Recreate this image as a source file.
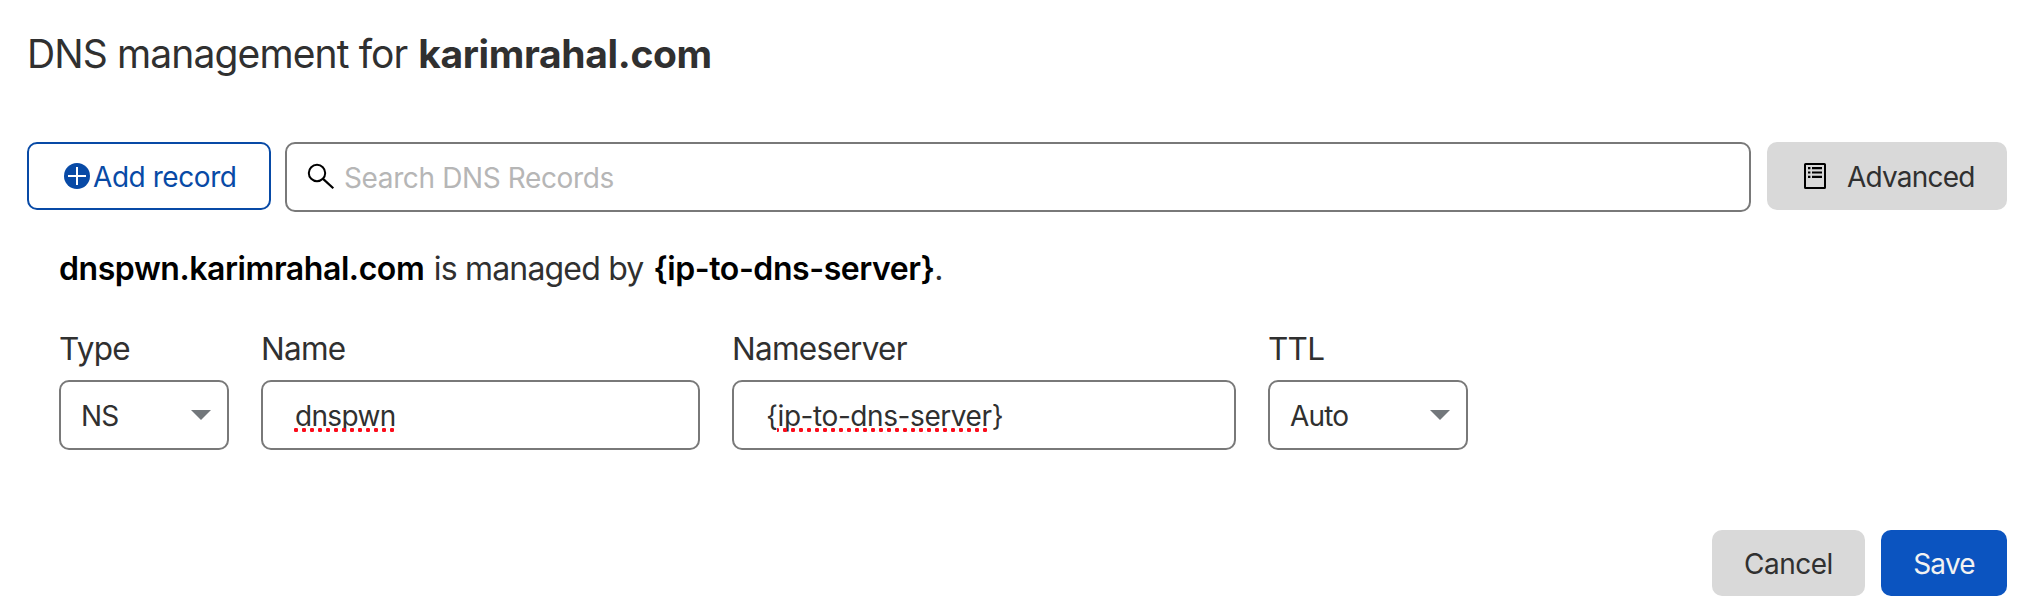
<template>
  <main class="page">
    <h1 class="title"><span>DNS management for</span>&#32;<strong>karimrahal.com</strong></h1>
    <div class="toolbar">
      <button class="btn add">
        <svg width="26" height="26" viewBox="0 0 26 26"><circle cx="13" cy="13" r="13" fill="#084aa6" /><path d="M13 4v18M4 13h18" stroke="#fff" stroke-width="2" /></svg>
        <span>Add record</span>
      </button>
      <div class="search">
        <svg width="28" height="28" viewBox="0 0 28 28" fill="none" stroke="#000"><circle cx="10" cy="10" r="8.2" stroke-width="2" /><path d="M15.8 15.6 26.3 25.2" stroke-width="2.2" /></svg>
        <span>Search DNS Records</span>
      </div>
      <button class="btn grey advanced">
        <svg width="22" height="26" viewBox="0 0 22 26" fill="none" stroke="#000"><rect x="1" y="1" width="20" height="24" rx=".6" stroke-width="2" /><path d="M4 5.2h2.4M8 5.2h10M4 9.5h2.4M8 9.5h10M4 13.8h2.4M8 13.8h10" stroke-width="2.2" /></svg>
        <span>Advanced</span>
      </button>
    </div>
    <p class="summary"><strong>dnspwn.karimrahal.com</strong>&#32;<span>is managed by</span>&#32;<strong>{ip-to-dns-server}</strong><span>.</span></p>
    <div class="fields">
      <div class="field type">
        <label>Type</label>
        <div class="box select"><span>NS</span><svg width="20" height="10" viewBox="0 0 20 10"><path d="M0 0h20L10 10z" fill="#72777b" /></svg></div>
      </div>
      <div class="field name">
        <label>Name</label>
        <div class="box"><span class="spell">dnspwn</span></div>
      </div>
      <div class="field ns">
        <label>Nameserver</label>
        <div class="box"><span class="spell inner">{ip-to-dns-server}</span></div>
      </div>
      <div class="field ttl">
        <label>TTL</label>
        <div class="box select"><span>Auto</span><svg width="20" height="10" viewBox="0 0 20 10"><path d="M0 0h20L10 10z" fill="#72777b" /></svg></div>
      </div>
    </div>
    <div class="actions">
      <button class="btn grey cancel"><span>Cancel</span></button>
      <button class="btn save"><span>Save</span></button>
    </div>
  </main>
</template>

<style>
body { background: #fff; }
</style>
<style scoped>
.page { box-sizing: border-box; width: 2038px; height: 616px; padding: 30px 31px 0 27px; font-family: Inter, "Liberation Sans", sans-serif; font-size: 28px; color: #303030; overflow: hidden; }
svg { flex: none; }
.title { margin: 0; height: 112px; font-size: 39px; line-height: 48px; font-weight: 400; letter-spacing: -.88px; white-space: nowrap; }
.title strong { letter-spacing: -.36px; margin-left: .8px; font-weight: 700; }
.toolbar { display: flex; align-items: flex-start; height: 108px; }
.btn { box-sizing: border-box; display: flex; align-items: center; height: 68px; margin: 0; padding: 0; border: 0; border-radius: 10px; font: inherit; line-height: 34px; color: inherit; white-space: nowrap; }
.btn span, .search span, .box span { padding-top: 2px; }
.grey { background: #d9d9d9; }
.add { width: 244px; border: 2px solid #084aa6; background: #fff; color: #084aa6; padding-left: 35px; gap: 3px; letter-spacing: -.44px; }
.search { box-sizing: border-box; display: flex; align-items: center; width: 1466px; height: 70px; margin: 0 16px 0 14px; border: 2px solid #797979; border-radius: 10px; padding-left: 20px; gap: 9px; color: #b6b6b6; line-height: 34px; letter-spacing: -.38px; }
.advanced { width: 240px; padding-left: 37px; gap: 21px; letter-spacing: -.8px; }
.summary { margin: 0; padding-left: 32px; height: 80px; font-size: 32px; line-height: 38px; letter-spacing: -.43px; white-space: nowrap; }
.summary strong { color: #000; font-weight: 600; }
.summary span { letter-spacing: -.82px; margin-left: .9px; margin-right: 1.2px; }
.summary span:last-child { margin-left: -.4px; }
.fields { display: flex; gap: 32px; padding-left: 32px; height: 200px; }
.field { display: flex; flex-direction: column; }
label { font-size: 31.5px; line-height: 38px; margin-bottom: 12px; align-self: flex-start; letter-spacing: -.72px; }
.box { box-sizing: border-box; display: flex; align-items: center; height: 70px; border: 2px solid #797979; border-radius: 10px; padding-left: 32px; line-height: 34px; letter-spacing: -.66px; }
.select { justify-content: space-between; padding: 0 16px 0 20px; letter-spacing: -.8px; }
.type { width: 170px; }
.name { width: 439px; }
.ns { width: 504px; }
.ttl { width: 200px; }
.spell { position: relative; }
.inner { letter-spacing: -.42px; }
.spell::after { content: ""; position: absolute; left: -1px; bottom: 1px; width: 100px; height: 4px; background: radial-gradient(circle at 2px 2px, #fb0d1b 2px, transparent 2.4px) 0 0 / 8px 4px repeat-x; }
.inner::after { left: 11px; width: 210px; background-position-x: -2px; }
.actions { display: flex; justify-content: flex-end; gap: 16px; }
.actions .btn { height: 66px; justify-content: center; }
.cancel { width: 153px; letter-spacing: -.5px; }
.save { width: 126px; background: #0b54c0; color: #f2f2f2; letter-spacing: -.8px; }
</style>
